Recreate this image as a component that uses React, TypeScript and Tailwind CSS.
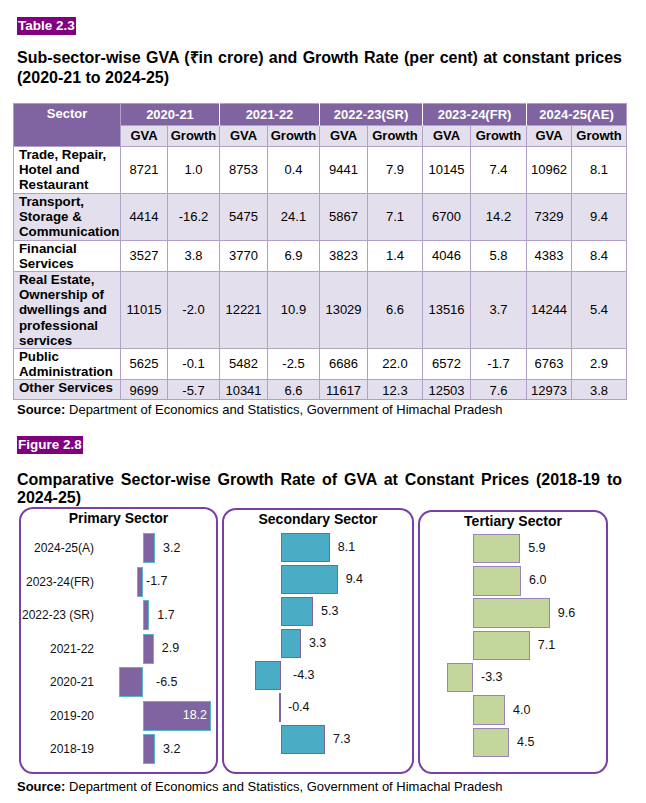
import React from 'react';

const font = { fontFamily: '"Liberation Sans", Arial, sans-serif' };

type TRow = { name: string[]; h: string; bg: string; v: string[] };

const years = ['2020-21', '2021-22', '2022-23(SR)', '2023-24(FR)', '2024-25(AE)'];

const rows: TRow[] = [
  { name: ['Trade, Repair,', 'Hotel and', 'Restaurant'], h: 'h-[47px]', bg: 'bg-white', v: ['8721', '1.0', '8753', '0.4', '9441', '7.9', '10145', '7.4', '10962', '8.1'] },
  { name: ['Transport,', 'Storage &', 'Communication'], h: 'h-[47px]', bg: 'bg-[#e4dfec]', v: ['4414', '-16.2', '5475', '24.1', '5867', '7.1', '6700', '14.2', '7329', '9.4'] },
  { name: ['Financial', 'Services'], h: 'h-[31px]', bg: 'bg-white', v: ['3527', '3.8', '3770', '6.9', '3823', '1.4', '4046', '5.8', '4383', '8.4'] },
  { name: ['Real Estate,', 'Ownership of', 'dwellings and', 'professional', 'services'], h: 'h-[77px]', bg: 'bg-[#e4dfec]', v: ['11015', '-2.0', '12221', '10.9', '13029', '6.6', '13516', '3.7', '14244', '5.4'] },
  { name: ['Public', 'Administration'], h: 'h-[31px]', bg: 'bg-white', v: ['5625', '-0.1', '5482', '-2.5', '6686', '22.0', '6572', '-1.7', '6763', '2.9'] },
  { name: ['Other Services'], h: 'h-[20px]', bg: 'bg-[#e4dfec]', v: ['9699', '-5.7', '10341', '6.6', '11617', '12.3', '12503', '7.6', '12973', '3.8'] },
];

const colW = [107, 47, 52, 48, 52, 48, 55, 48, 56, 45, 55];

type Bar = { label?: string; v: number; off?: number; inside?: boolean };

const primary: Bar[] = [
  { label: '2024-25(A)', v: 3.2 },
  { label: '2023-24(FR)', v: -1.7, off: 3 },
  { label: '2022-23 (SR)', v: 1.7 },
  { label: '2021-22', v: 2.9 },
  { label: '2020-21', v: -6.5, off: 13 },
  { label: '2019-20', v: 18.2, inside: true },
  { label: '2018-19', v: 3.2 },
];
const secondary: Bar[] = [
  { v: 8.1 }, { v: 9.4 }, { v: 5.3 }, { v: 3.3 }, { v: -4.3, off: 12 }, { v: -0.4, off: 7 }, { v: 7.3 },
];
const tertiary: Bar[] = [
  { v: 5.9 }, { v: 6.0 }, { v: 9.6 }, { v: 7.1 }, { v: -3.3, off: 8 }, { v: 4.0 }, { v: 4.5 },
];

function Panel({
  title, data, scale, outer, rowH, barCls, negW, labelW, listMt,
}: {
  title: string; data: Bar[]; scale: number; outer: string; rowH: string; barCls: string;
  negW: string; labelW?: string; listMt: string;
}) {
  return (
    <div className={`flex flex-col rounded-[14px] border-2 border-[#7a3fa6] ${outer}`}>
      <div className="text-center text-[14px] font-bold leading-[18px] text-black">{title}</div>
      <div className={`flex flex-col ${listMt}`}>
        {data.map((d, i) => (
          <div key={i} className={`flex items-center ${rowH}`}>
            {labelW && <div className={`${labelW} text-right text-[12px] text-[#111]`}>{d.label}</div>}
            <div className={`flex ${negW} justify-end`}>
              {d.v < 0 && <div className={barCls} style={{ width: Math.abs(d.v) * scale }} />}
            </div>
            <div className="flex flex-1 items-center">
              {d.v > 0 && (
                <div className={`${barCls} flex items-center justify-end`} style={{ width: d.v * scale }}>
                  {d.inside && <span className="pr-[3px] text-[12.5px] text-white">{d.v.toFixed(1)}</span>}
                </div>
              )}
              {!d.inside && (
                <span className="text-[12.5px] text-[#111]" style={{ marginLeft: d.v < 0 ? d.off : 8 }}>
                  {d.v.toFixed(1)}
                </span>
              )}
            </div>
          </div>
        ))}
      </div>
    </div>
  );
}

export default function App() {
  return (
    <div className="h-[803px] w-[646px] bg-white pt-[13px] text-black" style={font}>
      <div className="ml-[17px] inline-block bg-[#800080] px-[1px] text-[13.5px] font-bold leading-[18px] text-white">Table 2.3</div>
      <div className="ml-[17px] mr-[24px] mt-[11px] text-justify text-[16px] font-bold leading-[20px]">
        Sub-sector-wise GVA (₹in crore) and Growth Rate (per cent) at constant prices (2020-21 to 2024-25)
      </div>

      <table className="ml-[13px] mt-[15px] w-[614px] table-fixed border-collapse text-[13px]">
        <colgroup>
          {colW.map((w, i) => (
            <col key={i} style={{ width: w }} />
          ))}
        </colgroup>
        <thead>
          <tr className="h-[22px]">
            <th rowSpan={2} className="border border-[#b1a0c7] bg-[#8064a2] pt-[2px] align-top text-[13px] font-bold leading-[16px] text-white">
              Sector
            </th>
            {years.map((y, i) => (
              <th key={y} colSpan={2} className={`bg-[#8064a2] text-[13px] font-bold text-white ${i < 4 ? 'border-r border-r-white' : 'border-r border-r-[#b1a0c7]'} border-t border-t-[#b1a0c7]`}>
                {y}
              </th>
            ))}
          </tr>
          <tr className="h-[20px]">
            {years.map((y) => (
              <React.Fragment key={y}>
                <th className="border border-[#b1a0c7] bg-[#e4dfec] font-bold">GVA</th>
                <th className="border border-[#b1a0c7] bg-[#e4dfec] font-bold">Growth</th>
              </React.Fragment>
            ))}
          </tr>
        </thead>
        <tbody>
          {rows.map((r, i) => (
            <tr key={i} className={`${r.h} ${r.bg}`}>
              <td className="whitespace-nowrap border border-[#b1a0c7] px-[5px] align-top text-[13.3px] font-bold leading-[15.2px]">
                {r.name.map((n, j) => (
                  <div key={j}>{n}</div>
                ))}
              </td>
              {r.v.map((v, j) => (
                <td key={j} className={`border border-[#b1a0c7] text-center ${i === 5 ? 'pt-[3px] align-bottom leading-[16px]' : 'align-middle'}`}>
                  {v}
                </td>
              ))}
            </tr>
          ))}
        </tbody>
      </table>

      <div className="ml-[17px] mt-[2px] text-[13px] leading-[16px]">
        <span className="font-bold">Source:</span> Department of Economics and Statistics, Government of Himachal Pradesh
      </div>

      <div className="ml-[17px] mt-[18px] inline-block bg-[#800080] px-[1px] text-[13.5px] font-bold leading-[18px] text-white">Figure 2.8</div>
      <div className="ml-[17px] mr-[24px] mt-[15px] text-justify text-[16px] font-bold leading-[18px]">
        Comparative Sector-wise Growth Rate of GVA at Constant Prices (2018-19 to 2024-25)
      </div>

      <div className="ml-[19px] flex items-end gap-[4px]">
        <Panel
          title="Primary Sector"
          data={primary}
          scale={3.74}
          outer="h-[267px] w-[199px]"
          rowH="h-[33.5px]"
          barCls="h-[30px] border-[1.5px] border-[#5ab4cc] bg-[#8064a2]"
          labelW="w-[73px]"
          negW="w-[49px]"
          listMt="mt-[4px]"
        />
        <Panel
          title="Secondary Sector"
          data={secondary}
          scale={6.03}
          outer="h-[266px] w-[192px]"
          rowH="h-[32px]"
          barCls="h-[29.5px] border-[1.5px] border-[#8064a2] bg-[#4bacc6]"
          negW="w-[57px]"
          listMt="mt-[3px]"
        />
        <Panel
          title="Tertiary Sector"
          data={tertiary}
          scale={8.0}
          outer="h-[264px] w-[190px]"
          rowH="h-[32.3px]"
          barCls="h-[29.5px] border-[1.5px] border-[#9984b8] bg-[#c3d69b]"
          negW="w-[53px]"
          listMt="mt-[2px]"
        />
      </div>

      <div className="ml-[17px] mt-[5px] text-[13px] leading-[16px]">
        <span className="font-bold">Source:</span> Department of Economics and Statistics, Government of Himachal Pradesh
      </div>
    </div>
  );
}
